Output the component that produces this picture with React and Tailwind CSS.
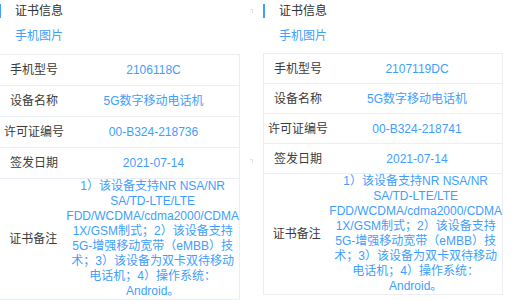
const remarkLines = [
  '1）该设备支持NR NSA/NR',
  'SA/TD-LTE/LTE',
  'FDD/WCDMA/cdma2000/CDMA',
  '1X/GSM制式；2）该设备支持',
  '5G-增强移动宽带（eMBB）技',
  '术；3）该设备为双卡双待移动',
  '电话机；4）操作系统：',
  'Android。',
]

const panels = [
  { model: '2106118C', license: '00-B324-218736', rowH: 'h-[31px]', extra: '-ml-px w-[241px]', gap: 'mt-[9px]' },
  { model: '2107119DC', license: '00-B324-218741', rowH: 'h-[30px]', extra: 'w-[240px]', gap: 'mt-[8px]' },
]

function Row({ label, value, rowH }) {
  return (
    <div className={`flex items-center ${rowH} border-b border-[#ebeef5]`}>
      <div className="w-[68px] text-center text-[12px] text-[#3a3a3a]">{label}</div>
      <div className="flex-1 text-center text-[12px] text-[#409eff]">{value}</div>
    </div>
  )
}

function Panel({ panel }) {
  return (
    <div className={`flex flex-col ${panel.extra}`}>
      {/* header */}
      <div className="flex items-center h-[20px] mt-px">
        <div className="w-[2px] h-[14px] bg-[#409eff]" />
        <span className="ml-[14px] text-[12px] text-[#303133]">证书信息</span>
      </div>
      <div className="mt-[6px] ml-[16px] text-[12px] text-[#409eff] leading-[18px]">手机图片</div>

      <div className={`border border-[#ebeef5] ${panel.gap}`}>
        <Row label="手机型号" value={panel.model} rowH={panel.rowH} />
        <Row label="设备名称" value="5G数字移动电话机" rowH={panel.rowH} />
        <Row label="许可证编号" value={panel.license} rowH={panel.rowH} />
        <Row label="签发日期" value="2021-07-14" rowH={panel.rowH} />
        <div className="flex items-center">
          <div className="w-[68px] text-center text-[12px] text-[#3a3a3a]">证书备注</div>
          <div className="flex-1 text-center text-[12px] leading-[15px] text-[#409eff] whitespace-nowrap">
            {remarkLines.map((line) => (
              <div key={line}>{line}</div>
            ))}
          </div>
        </div>
      </div>
    </div>
  )
}

export default function App() {
  return (
    <div
      className="w-[515px] h-[300px] overflow-hidden bg-white flex"
      style={{ fontFamily: '"Liberation Sans", "Noto Sans CJK SC", sans-serif' }}
    >
      <Panel panel={panels[0]} />
      <div className="w-[23px] flex flex-col items-center">
        <div className="mt-[9px] w-[3px] h-[4px] border-t border-r border-[#e4e4e4]" />
        <div className="mt-[146px] w-[3px] h-[4px] border-t border-r border-[#e4e4e4]" />
      </div>
      <Panel panel={panels[1]} />
    </div>
  )
}
